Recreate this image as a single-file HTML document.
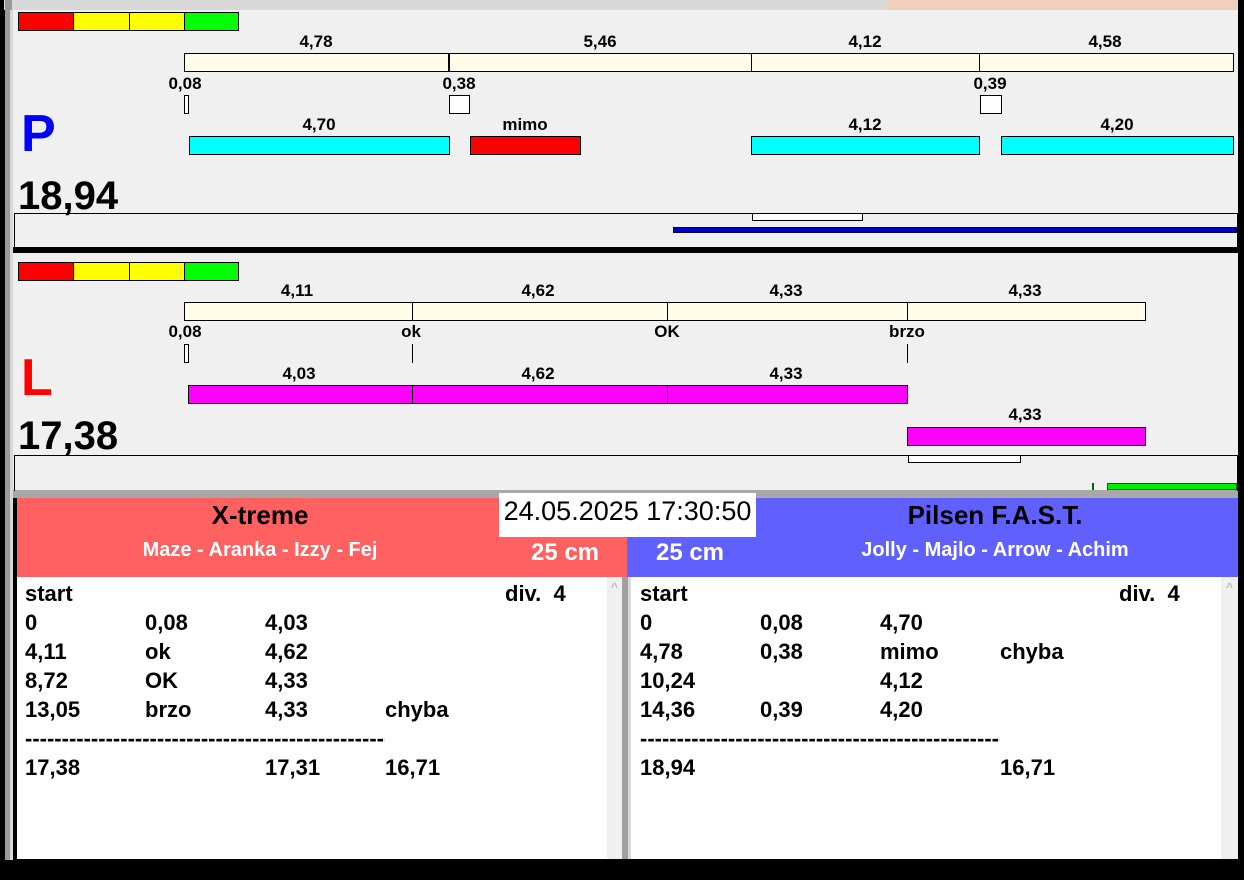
<!DOCTYPE html>
<html><head><meta charset="utf-8"><style>
*{margin:0;padding:0;box-sizing:border-box}
body{width:1244px;height:880px;background:#000;position:relative;overflow:hidden;font-family:"Liberation Sans",Arial,sans-serif;font-weight:bold}
div{position:absolute}
.t{font-size:17px;color:#000;transform:translateX(-50%);white-space:nowrap;line-height:1}
.bx{border:1px solid #000}
.r{font-size:22px;line-height:1;white-space:nowrap}
</style></head><body>
<div style="left:4px;top:0;width:1234px;height:10px;background:#d8d8d8"></div>
<div style="left:887px;top:0;width:351px;height:11px;background:#f0d0b8"></div>
<div style="left:5px;top:0;width:7px;height:860px;background:#9a9a9a"></div>
<div style="left:10px;top:10px;width:3px;height:850px;background:#d8d8d8"></div>
<div style="left:13px;top:10px;width:1225px;height:238px;background:#f0f0f0"></div>
<div style="left:13px;top:247px;width:1225px;height:6px;background:#000"></div>
<div style="left:13px;top:253px;width:1225px;height:238px;background:#f0f0f0"></div>
<div style="left:13px;top:490px;width:1225px;height:8px;background:#a8a8a8"></div>

<div class="bx" style="left:18px;top:12px;width:56px;height:19px;background:#f00"></div>
<div class="bx" style="left:73px;top:12px;width:57px;height:19px;background:#ff0"></div>
<div class="bx" style="left:129px;top:12px;width:56px;height:19px;background:#ff0"></div>
<div class="bx" style="left:184px;top:12px;width:55px;height:19px;background:#0f0"></div>

<div class="bx" style="left:184px;top:53px;width:1050px;height:19px;background:#fffde8"></div>
<div style="left:448px;top:53px;width:2px;height:19px;background:#000"></div>
<div style="left:751px;top:53px;width:1px;height:19px;background:#000"></div>
<div style="left:979px;top:53px;width:1px;height:19px;background:#000"></div>
<div class="t" style="left:316px;top:33px">4,78</div>
<div class="t" style="left:600px;top:33px">5,46</div>
<div class="t" style="left:865px;top:33px">4,12</div>
<div class="t" style="left:1105px;top:33px">4,58</div>
<div class="t" style="left:185px;top:75px">0,08</div>
<div class="t" style="left:459px;top:75px">0,38</div>
<div class="t" style="left:990px;top:75px">0,39</div>
<div class="bx" style="left:184px;top:95px;width:5px;height:19px;background:#fff"></div>
<div class="bx" style="left:449px;top:95px;width:21px;height:19px;background:#fff"></div>
<div class="bx" style="left:980px;top:95px;width:22px;height:19px;background:#fff"></div>
<div class="t" style="left:319px;top:116px">4,70</div>
<div class="t" style="left:525px;top:116px">mimo</div>
<div class="t" style="left:865px;top:116px">4,12</div>
<div class="t" style="left:1117px;top:116px">4,20</div>
<div class="bx" style="left:189px;top:136px;width:261px;height:19px;background:#0ff"></div>
<div class="bx" style="left:470px;top:136px;width:111px;height:19px;background:#f00"></div>
<div class="bx" style="left:751px;top:136px;width:229px;height:19px;background:#0ff"></div>
<div class="bx" style="left:1001px;top:136px;width:233px;height:19px;background:#0ff"></div>
<div style="left:21px;top:108px;font-size:52px;color:#00f;line-height:1">P</div>
<div style="left:18px;top:176px;font-size:40px;line-height:1">18,94</div>
<div style="left:14px;top:213px;width:1224px;height:36px;border-top:1px solid #000;border-left:1px solid #000;border-right:1px solid #000"></div>
<div class="bx" style="left:752px;top:213px;width:111px;height:8px;background:#fff"></div>
<div style="left:673px;top:227px;width:564px;height:6px;background:#00c;border:1px solid #003"></div>

<div class="bx" style="left:18px;top:262px;width:56px;height:19px;background:#f00"></div>
<div class="bx" style="left:73px;top:262px;width:57px;height:19px;background:#ff0"></div>
<div class="bx" style="left:129px;top:262px;width:56px;height:19px;background:#ff0"></div>
<div class="bx" style="left:184px;top:262px;width:55px;height:19px;background:#0f0"></div>
<div class="bx" style="left:184px;top:302px;width:962px;height:19px;background:#fffde8"></div>
<div style="left:412px;top:302px;width:1px;height:19px;background:#000"></div>
<div style="left:667px;top:302px;width:1px;height:19px;background:#000"></div>
<div style="left:907px;top:302px;width:1px;height:19px;background:#000"></div>
<div class="t" style="left:297px;top:282px">4,11</div>
<div class="t" style="left:538px;top:282px">4,62</div>
<div class="t" style="left:786px;top:282px">4,33</div>
<div class="t" style="left:1025px;top:282px">4,33</div>
<div class="t" style="left:185px;top:323px">0,08</div>
<div class="t" style="left:411px;top:323px">ok</div>
<div class="t" style="left:667px;top:323px">OK</div>
<div class="t" style="left:907px;top:323px">brzo</div>
<div class="bx" style="left:184px;top:344px;width:5px;height:19px;background:#fff"></div>
<div style="left:412px;top:344px;width:1px;height:19px;background:#000"></div>
<div style="left:907px;top:344px;width:1px;height:19px;background:#000"></div>
<div class="t" style="left:299px;top:365px">4,03</div>
<div class="t" style="left:538px;top:365px">4,62</div>
<div class="t" style="left:786px;top:365px">4,33</div>
<div class="bx" style="left:188px;top:385px;width:720px;height:19px;background:#f0f"></div>
<div style="left:412px;top:385px;width:1px;height:19px;background:#000"></div>
<div style="left:667px;top:385px;width:1px;height:19px;background:#000"></div>
<div class="t" style="left:1025px;top:406px">4,33</div>
<div class="bx" style="left:907px;top:427px;width:239px;height:19px;background:#f0f"></div>
<div style="left:21px;top:352px;font-size:52px;color:#f00;line-height:1">L</div>
<div style="left:18px;top:416px;font-size:40px;line-height:1">17,38</div>
<div style="left:14px;top:455px;width:1224px;height:36px;border-top:1px solid #000;border-left:1px solid #000;border-right:1px solid #000"></div>
<div class="bx" style="left:908px;top:455px;width:113px;height:8px;background:#fff"></div>
<div style="left:1092px;top:483px;width:2px;height:7px;background:#060"></div>
<div style="left:1107px;top:483px;width:130px;height:7px;background:#0e0;border:1px solid #060"></div>

<div style="left:17px;top:498px;width:610px;height:79px;background:#ff6060"></div>
<div style="left:627px;top:498px;width:611px;height:79px;background:#6060ff"></div>
<div style="left:499px;top:493px;width:257px;height:44px;background:#fff;font-weight:normal;font-size:27px;text-align:center;line-height:36px">24.05.2025 17:30:50</div>
<div class="t" style="left:260px;top:502px;font-size:26px">X-treme</div>
<div class="t" style="left:260px;top:540px;font-size:20px;color:#fff">Maze - Aranka - Izzy - Fej</div>
<div class="t" style="left:565px;top:541px;font-size:24px;color:#fff">25 cm</div>
<div class="t" style="left:690px;top:541px;font-size:24px;color:#fff">25 cm</div>
<div class="t" style="left:995px;top:502px;font-size:26px">Pilsen F.A.S.T.</div>
<div class="t" style="left:995px;top:540px;font-size:20px;color:#fff">Jolly - Majlo - Arrow - Achim</div>

<div style="left:17px;top:577px;width:590px;height:282px;background:#fff"></div>
<div style="left:607px;top:577px;width:15px;height:282px;background:#f0f0f0;color:#bbb;font-size:12px;text-align:center;line-height:20px">^</div>
<div style="left:622px;top:577px;width:9px;height:282px;background:#a0a0a0;border-right:3px solid #d8d8d8"></div>
<div style="left:631px;top:577px;width:590px;height:282px;background:#fff"></div>
<div style="left:1221px;top:577px;width:17px;height:282px;background:#f0f0f0;color:#bbb;font-size:12px;text-align:center;line-height:20px">^</div>

<div class="r" style="left:25px;top:583px">start</div><div class="r" style="left:505px;top:583px">div.&nbsp; 4</div>
<div class="r" style="left:25px;top:612px">0</div><div class="r" style="left:145px;top:612px">0,08</div><div class="r" style="left:265px;top:612px">4,03</div>
<div class="r" style="left:25px;top:641px">4,11</div><div class="r" style="left:145px;top:641px">ok</div><div class="r" style="left:265px;top:641px">4,62</div>
<div class="r" style="left:25px;top:670px">8,72</div><div class="r" style="left:145px;top:670px">OK</div><div class="r" style="left:265px;top:670px">4,33</div>
<div class="r" style="left:25px;top:699px">13,05</div><div class="r" style="left:145px;top:699px">brzo</div><div class="r" style="left:265px;top:699px">4,33</div><div class="r" style="left:385px;top:699px">chyba</div>
<div class="r" style="left:25px;top:728px;width:360px;overflow:hidden">------------------------------------------------------------</div>
<div class="r" style="left:25px;top:757px">17,38</div><div class="r" style="left:265px;top:757px">17,31</div><div class="r" style="left:385px;top:757px">16,71</div>

<div class="r" style="left:640px;top:583px">start</div><div class="r" style="left:1119px;top:583px">div.&nbsp; 4</div>
<div class="r" style="left:640px;top:612px">0</div><div class="r" style="left:760px;top:612px">0,08</div><div class="r" style="left:880px;top:612px">4,70</div>
<div class="r" style="left:640px;top:641px">4,78</div><div class="r" style="left:760px;top:641px">0,38</div><div class="r" style="left:880px;top:641px">mimo</div><div class="r" style="left:1000px;top:641px">chyba</div>
<div class="r" style="left:640px;top:670px">10,24</div><div class="r" style="left:880px;top:670px">4,12</div>
<div class="r" style="left:640px;top:699px">14,36</div><div class="r" style="left:760px;top:699px">0,39</div><div class="r" style="left:880px;top:699px">4,20</div>
<div class="r" style="left:640px;top:728px;width:360px;overflow:hidden">------------------------------------------------------------</div>
<div class="r" style="left:640px;top:757px">18,94</div><div class="r" style="left:1000px;top:757px">16,71</div>
</body></html>
